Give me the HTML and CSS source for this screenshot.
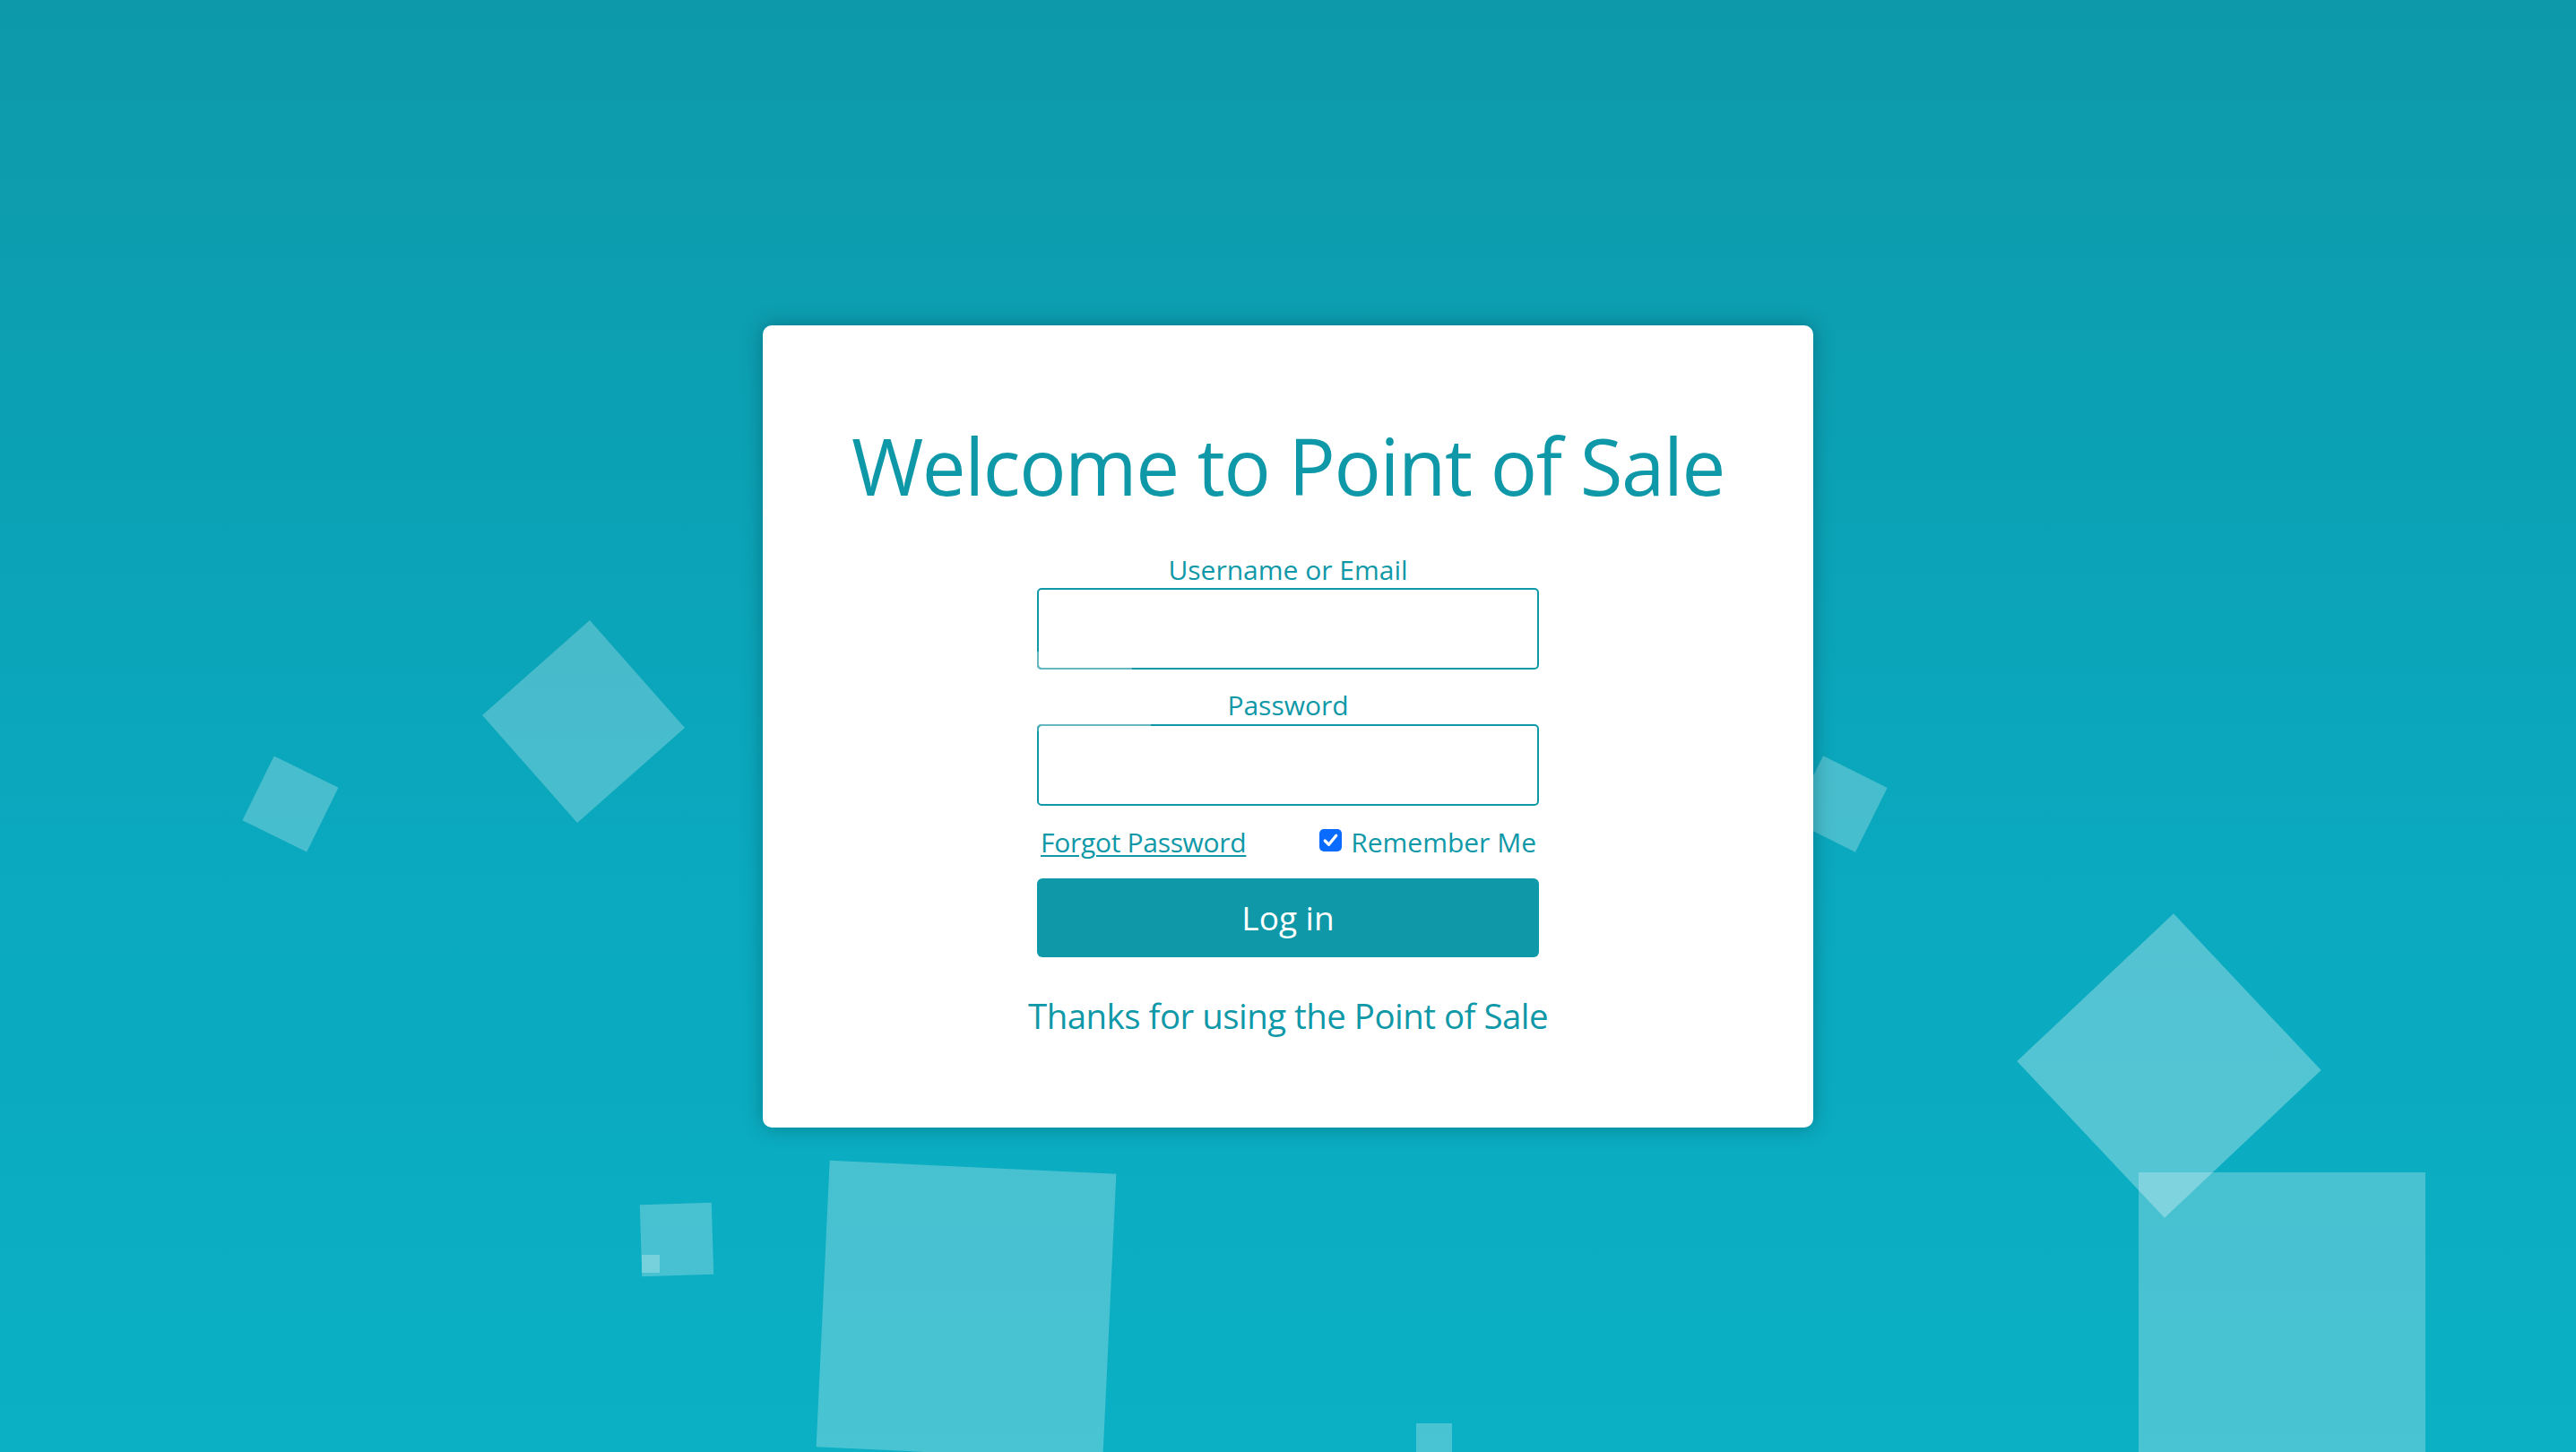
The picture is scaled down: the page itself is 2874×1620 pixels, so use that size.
FILE: index.html
```html
<!DOCTYPE html>
<html lang="en">
<head>
<meta charset="utf-8">
<title>Point of Sale - Log in</title>
<link rel="stylesheet" href="styles.css">
</head>
<body>
<ul class="bubbles">
  <li class="bubble b1"></li>
  <li class="bubble b2"></li>
  <li class="bubble b3"></li>
  <li class="bubble b3s"></li>
  <li class="bubble b4"></li>
  <li class="bubble b5"></li>
  <li class="bubble b6"></li>
  <li class="bubble b7"></li>
  <li class="bubble b8"></li>
</ul>
<main class="card">
  <h1 class="title">Welcome to Point of Sale</h1>
  <form class="form">
    <label class="label" for="user">Username or Email</label>
    <div class="field field-user"><input class="input" id="user" type="text"></div>
    <label class="label label-pw" for="pw">Password</label>
    <div class="field field-pw"><input class="input" id="pw" type="password"></div>
    <div class="row">
      <a class="link" href="#">Forgot Password</a>
      <label class="remember">
        <span class="check"><svg viewBox="0 0 26 26" width="25" height="25"><path d="M6.5 13.5 L11 18 L19.5 7.5" fill="none" stroke="#fff" stroke-width="3.4" stroke-linecap="round" stroke-linejoin="round"/></svg></span>
        <span>Remember Me</span>
      </label>
    </div>
    <button class="btn" type="button">Log in</button>
  </form>
  <p class="thanks">Thanks for using the Point of Sale</p>
</main>
</body>
</html>
```
FILE: styles.css
```css
html, body {
  margin: 0;
  padding: 0;
}
body {
  min-height: 100vh;
  width: 100%;
  overflow: hidden;
  display: flex;
  align-items: center;
  justify-content: center;
  background: linear-gradient(to bottom, #0d99aa 0%, #0aa9bf 60%, #0bb0c4 100%);
  font-family: "Open Sans", "Noto Sans", sans-serif;
  color: #0f98a8;
}
.bubbles {
  position: absolute;
  inset: 0;
  margin: 0;
  padding: 0;
  list-style: none;
  overflow: hidden;
  z-index: 0;
}
.bubble {
  position: absolute;
  background: rgba(255, 255, 255, 0.25);
}
.b1 { left: 571px; top: 725px; width: 160px; height: 160px; transform: rotate(48.5deg); }
.b2 { left: 284px; top: 857px; width: 80px; height: 80px; transform: rotate(26.2deg); }
.b3 { left: 715px; top: 1343px; width: 80px; height: 80px; transform: rotate(-1.8deg); }
.b3s { left: 716px; top: 1400px; width: 20px; height: 20px; }
.b4 { left: 918px; top: 1302px; width: 320px; height: 320px; transform: rotate(2.7deg); }
.b5 { left: 2012px; top: 857px; width: 80px; height: 80px; transform: rotate(26.5deg); }
.b6 { left: 2300px; top: 1069px; width: 240px; height: 240px; transform: rotate(46.7deg); background: rgba(255, 255, 255, 0.3); }
.b7 { left: 2386px; top: 1308px; width: 320px; height: 320px; }
.b8 { left: 1580px; top: 1588px; width: 40px; height: 40px; }

.card {
  position: relative;
  z-index: 1;
  box-sizing: border-box;
  width: 1172px;
  height: 895px;
  padding: 104px 0 0;
  background: #fff;
  border-radius: 10px;
  box-shadow: 0 0 22px rgba(0, 40, 50, 0.35);
  display: flex;
  flex-direction: column;
  align-items: center;
}
.title {
  margin: 0;
  font-size: 87px;
  line-height: 104px;
  font-weight: 400;
  color: #0f98a8;
  letter-spacing: -1.4px;
}
.form {
  margin: 47px 0 0;
  width: 560px;
  display: flex;
  flex-direction: column;
  align-items: stretch;
}
.label {
  display: block;
  text-align: center;
  font-size: 30px;
  line-height: 36px;
  margin-bottom: 2px;
  color: #0f98a8;
}
.label-pw {
  margin-top: 22px;
  margin-bottom: 3px;
}
.field {
  position: relative;
}
.field::after {
  content: "";
  position: absolute;
  left: 0;
  box-sizing: border-box;
  border-color: #66b7c0;
  border-style: solid;
  pointer-events: none;
}
.field-user::after {
  bottom: 0;
  width: 106px;
  height: 20px;
  border-width: 0 0 2px 2px;
  border-bottom-left-radius: 5px;
}
.field-pw::after {
  top: 0;
  width: 127px;
  height: 8px;
  border-width: 2px 0 0 2px;
  border-top-left-radius: 5px;
  border-left-color: #3fa9b4;
}
.input {
  display: block;
  box-sizing: border-box;
  width: 100%;
  height: 91px;
  margin: 0;
  border: 2px solid #0f98a8;
  border-radius: 5px;
  background: #fff;
  font-family: inherit;
  font-size: 30px;
  padding: 0 16px;
  outline: none;
}
.row {
  margin-top: 23px;
  display: flex;
  justify-content: space-between;
  align-items: center;
  padding: 0 3px 0 4px;
  font-size: 30px;
  line-height: 36px;
}
.link {
  color: #0f98a8;
  text-decoration: underline;
  text-decoration-thickness: 2px;
  text-underline-offset: 3px;
  letter-spacing: -0.3px;
}
.remember {
  display: flex;
  align-items: center;
  gap: 10px;
  color: #0f98a8;
}
.check {
  width: 25px;
  height: 25px;
  border-radius: 5px;
  background: #0a6cfe;
  display: flex;
  align-items: center;
  justify-content: center;
  margin-top: -4px;
}
.check svg {
  display: block;
}
.btn {
  margin-top: 22px;
  height: 88px;
  width: 100%;
  border: none;
  border-radius: 6px;
  background: #0e98a8;
  color: #fff;
  font-family: inherit;
  font-size: 37px;
  line-height: 50px;
  padding: 0;
  cursor: pointer;
}
.thanks {
  margin: 42px 0 0;
  font-size: 38.4px;
  line-height: 46px;
  letter-spacing: -0.5px;
  color: #0f98a8;
}
```
